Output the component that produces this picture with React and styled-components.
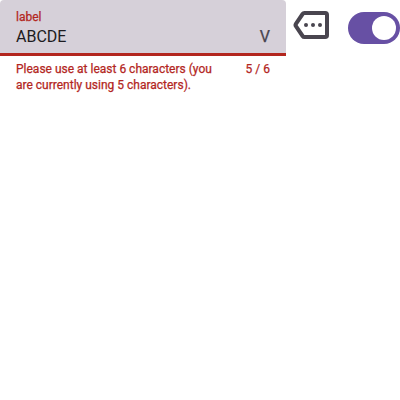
import React from "react";
import styled, { createGlobalStyle } from "styled-components";

const GlobalStyle = createGlobalStyle`
  body { margin: 0; background: #fff; }
  * { box-sizing: border-box; }
`;
const Row = styled.main`
  display: flex;
  align-items: flex-start;
  width: 400px;
  font-family: Roboto, "Liberation Sans", sans-serif;
`;
const Field = styled.div`
  width: 286px;
  flex: none;
`;
const Container = styled.div`
  display: flex;
  justify-content: space-between;
  align-items: flex-end;
  height: 56px;
  padding: 0 16px 4px;
  background: #d6d0d9;
  border-radius: 4px 4px 0 0;
  border-bottom: 3px solid #b3261e;
`;
const Stack = styled.div`
  display: flex;
  flex-direction: column;
`;
const Label = styled.label`
  font-size: 12px;
  line-height: 16px;
  -webkit-text-stroke: 0.25px currentColor;
  color: #b3261e;
`;
const Value = styled.span`
  font-size: 16px;
  line-height: 24px;
  -webkit-text-stroke: ${(p) => (p.$muted ? "0.25px" : "0")} currentColor;
  color: ${(p) => (p.$muted ? "#49454f" : "#1d1b20")};
`;
const Support = styled.div`
  display: flex;
  justify-content: space-between;
  gap: 16px;
  padding: 5px 16px 0;
  font-size: 12px;
  line-height: 16px;
  -webkit-text-stroke: 0.25px currentColor;
  color: #b3261e;
`;
const Message = styled.span`
  width: 205px;
`;
const Counter = styled.span`
  white-space: nowrap;
`;
const TagIcon = styled.svg`
  display: block;
  flex: none;
  width: 36px;
  height: 28px;
  margin: 11px 0 0 7px;
`;
const Switch = styled.div`
  display: flex;
  justify-content: flex-end;
  align-items: center;
  flex: none;
  width: 52px;
  height: 32px;
  margin: 12px 0 0 19px;
  padding: 4px;
  border-radius: 16px;
  background: #6750a4;
`;
const Handle = styled.span`
  width: 24px;
  height: 24px;
  border-radius: 50%;
  background: #fff;
`;

export default function App() {
  return (
    <>
      <GlobalStyle />
      <Row>
        <Field>
          <Container>
            <Stack>
              <Label>label</Label>
              <Value>ABCDE</Value>
            </Stack>
            <Value $muted>V</Value>
          </Container>
          <Support>
            <Message>Please use at least 6 characters (you are currently using 5 characters).</Message>
            <Counter>5 / 6</Counter>
          </Support>
        </Field>
        <TagIcon viewBox="0 0 36 28" fill="none">
          <path d="M11.4 2H32.2Q34 2 34 3.8V24.2Q34 26 32.2 26H11.4Q10.3 26 9.6 25L2.9 15.2Q2.1 14 2.9 12.8L9.6 3Q10.3 2 11.4 2Z" stroke="#49454f" strokeWidth="4" strokeLinejoin="round" />
          <g fill="#49454f">
            <circle cx="13" cy="14" r="2" />
            <circle cx="20" cy="14" r="2" />
            <circle cx="27" cy="14" r="2" />
          </g>
        </TagIcon>
        <Switch role="switch" aria-checked="true">
          <Handle />
        </Switch>
      </Row>
    </>
  );
}
